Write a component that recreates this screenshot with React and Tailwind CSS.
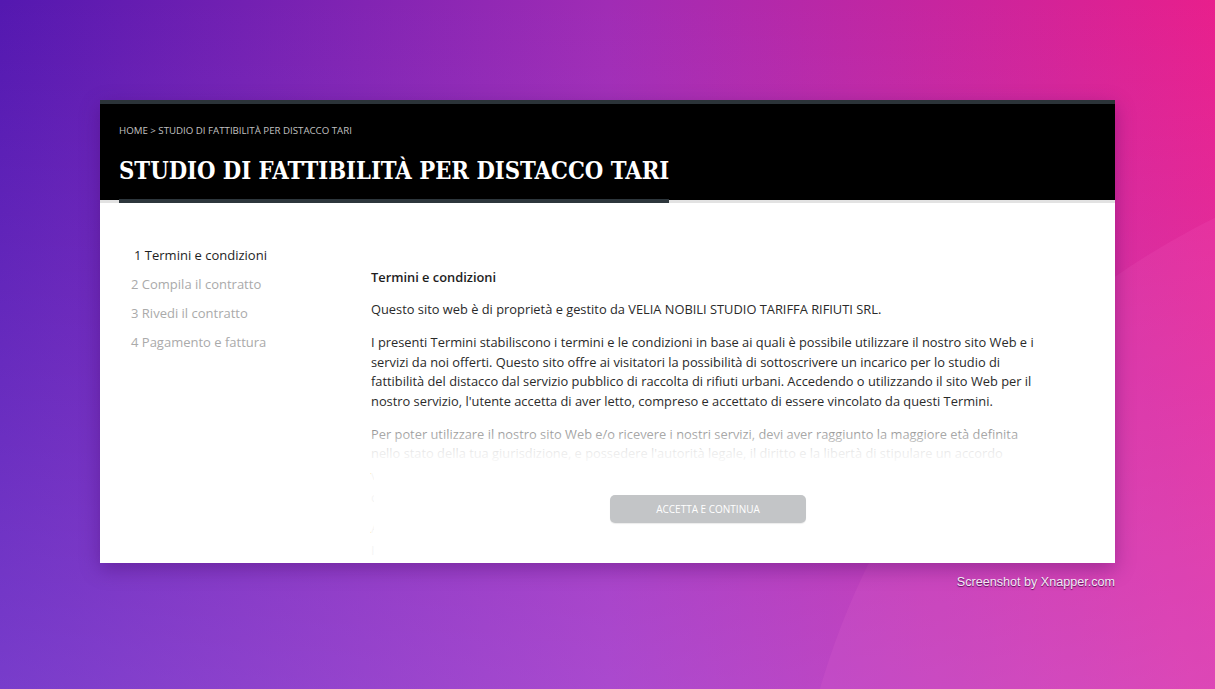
import React from 'react'

const STEPS = [
  { n: 1, label: 'Termini e condizioni', active: true },
  { n: 2, label: 'Compila il contratto' },
  { n: 3, label: 'Rivedi il contratto' },
  { n: 4, label: 'Pagamento e fattura' },
]

function StepNav() {
  return (
    <ul className="w-[271px] shrink-0 pl-[31px] pt-[38px] text-[13px] leading-[29px]">
      {STEPS.map(s => (
        <li key={s.n} className={s.active ? 'pl-[3px] text-[#1e1e1e]' : 'text-[#aaaaaa]'}>
          {s.n} {s.label}
        </li>
      ))}
    </ul>
  )
}

function Terms() {
  return (
    <div className="relative w-[674px] pt-[65px]">
      <div className="text-[12.85px] leading-[19.5px] text-[#2a2a2a]">
        <h3 className="font-semibold text-[#1e1e1e]">Termini e condizioni</h3>
        <p className="mt-[12.5px]">
          Questo sito web è di proprietà e gestito da VELIA NOBILI STUDIO TARIFFA RIFIUTI SRL.
        </p>
        <p className="mt-[13.5px] pr-[4px]">
          I presenti Termini stabiliscono i termini e le condizioni in base ai quali è possibile utilizzare il nostro sito Web e i servizi da noi offerti. Questo sito offre ai visitatori la possibilità di sottoscrivere un incarico per lo studio di fattibilità del distacco dal servizio pubblico di raccolta di rifiuti urbani. Accedendo o utilizzando il sito Web per il nostro servizio, l'utente accetta di aver letto, compreso e accettato di essere vincolato da questi Termini.
        </p>
        <p className="mt-[13.5px]">
          Per poter utilizzare il nostro sito Web e/o ricevere i nostri servizi, devi aver raggiunto la maggiore età definita<br />
          nello stato della tua giurisdizione, e possedere l'autorità legale, il diritto e la libertà di stipulare un accordo<br />
          <span className="leading-[22px]">vincolante con noi.</span><br />
          <span className="leading-[22px]">con i presenti Termini.</span>
        </p>
        <p className="mt-[9px] leading-[22px]">
          Accettando i Termini<br />
          Il servizio è regolato
        </p>
      </div>

      {/* fade over the remaining text */}
      <div className="absolute left-[3px] right-0 top-[200px] bottom-0 bg-[linear-gradient(to_bottom,rgba(255,255,255,0)_0px,rgba(255,255,255,0.55)_30px,rgba(255,255,255,0.9)_49px,rgba(255,255,255,1)_64px,rgba(255,255,255,1)_100%)]" />
      <div className="absolute left-0 w-[3px] top-[200px] bottom-0 bg-[linear-gradient(to_bottom,rgba(255,255,255,0)_0px,rgba(255,255,255,0.55)_30px,rgba(255,255,255,0.9)_49px,rgba(255,255,255,0.95)_64px,rgba(255,255,255,0.95)_100%)]" />

      <div className="absolute left-0 right-0 top-[292px] flex justify-center">
        <button className="h-[28px] w-[196px] rounded-[5px] bg-[#c3c5c7] text-[10px] uppercase text-white shadow-[0_1px_1px_rgba(0,0,0,0.08)]">
          Accetta e continua
        </button>
      </div>
    </div>
  )
}

export default function App() {
  return (
    <div className="relative h-[689px] w-[1215px] overflow-hidden bg-[linear-gradient(to_bottom,rgba(190,130,255,0)_0%,rgba(190,130,255,0.34)_100%),linear-gradient(to_right,#5418b0_0%,#a02cb5_50%,#e81f8c_100%)] font-['Open_Sans',sans-serif]">
      <div className="pointer-events-none absolute left-[790px] top-[140px] h-[1520px] w-[1520px] rounded-full bg-[rgba(255,130,220,0.1)]" />

      <div className="relative pl-[100px] pt-[100px]">
        <div className="w-[1015px] bg-white shadow-[0_6px_18px_rgba(60,0,90,0.35)]">
          <header className="border-t-4 border-b-[3px] border-t-[#2b3338] border-b-[#e2e2e2] bg-black pl-[19px] pt-[21px]">
            <div className="text-[9.7px] leading-[12px] text-[#c0c0c0]">
              HOME &gt; STUDIO DI FATTIBILITÀ PER DISTACCO TARI
            </div>
            <h1 className="-mb-[3px] mt-[17px] inline-block border-b-4 border-[#2d363c] pb-[11px] font-['DejaVu_Serif',serif] text-[23.6px] font-bold leading-[34px] text-white font-stretch-condensed">
              STUDIO DI FATTIBILITÀ PER DISTACCO TARI
            </h1>
          </header>

          <div className="flex h-[360px] overflow-hidden">
            <StepNav />
            <Terms />
          </div>
        </div>
      </div>

      <div className="absolute right-[100px] top-[573px] font-['Liberation_Sans',sans-serif] text-[12.6px] text-[#f4e8f6] [text-shadow:0_1px_1px_rgba(60,0,60,0.8)]">
        Screenshot by Xnapper.com
      </div>
    </div>
  )
}
